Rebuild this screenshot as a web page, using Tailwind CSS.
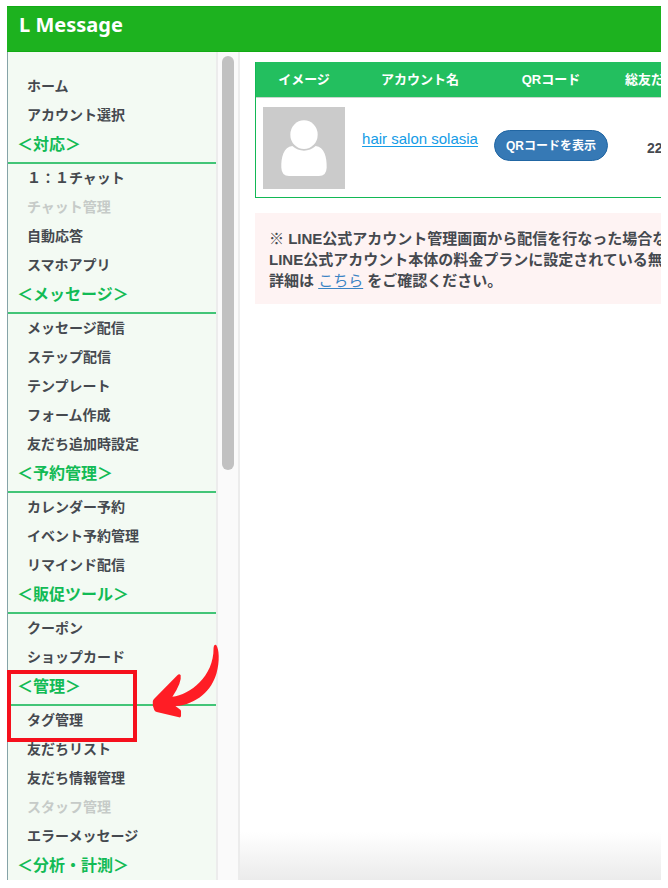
<!DOCTYPE html>
<html lang="ja">
<head>
    <meta charset="UTF-8">
    <meta name="viewport" content="width=device-width, initial-scale=1.0">
    <title>L Message</title>
    <script src="https://cdn.jsdelivr.net/npm/@tailwindcss/browser@4"></script>
</head>
<body class="h-screen bg-white pt-[6px] pb-2 px-[7px] font-['Liberation_Sans','Noto_Sans_CJK_JP',sans-serif] text-[#45494f]">
    <div class="h-full flex flex-col overflow-hidden">
        <!-- Header -->
        <header class="h-[46px] shrink-0 bg-[#1db21f] border-y border-[#12ab14] px-3 pt-1">
            <h1 class="text-xl leading-7 font-bold text-white font-['Noto_Sans',sans-serif]">L Message</h1>
        </header>

        <div class="flex flex-1 min-h-0">
            <!-- Sidebar -->
            <nav class="w-[211px] shrink-0 bg-[#f3faf3] border-l border-l-[#86a3a8] border-r-2 border-r-[#ececec] pt-5 text-sm leading-[29px] font-bold">
                <ul class="pl-[19px]">
                    <li><a href="#">ホーム</a></li>
                    <li><a href="#">アカウント選択</a></li>
                </ul>

                <h2 class="h-[34px] pl-[9px] text-base leading-[30px] text-[#12bb55] border-b-2 border-[#42c577]">＜対応＞</h2>
                <ul class="pl-[19px]">
                    <li><a href="#">１：１チャット</a></li>
                    <li><a href="#" class="text-[#c6cbc8]">チャット管理</a></li>
                    <li><a href="#">自動応答</a></li>
                    <li><a href="#">スマホアプリ</a></li>
                </ul>

                <h2 class="h-[34px] pl-[9px] text-base leading-[30px] text-[#12bb55] border-b-2 border-[#42c577]">＜メッセージ＞</h2>
                <ul class="pl-[19px]">
                    <li><a href="#">メッセージ配信</a></li>
                    <li><a href="#">ステップ配信</a></li>
                    <li><a href="#">テンプレート</a></li>
                    <li><a href="#">フォーム作成</a></li>
                    <li><a href="#">友だち追加時設定</a></li>
                </ul>

                <h2 class="h-[34px] pl-[9px] text-base leading-[30px] text-[#12bb55] border-b-2 border-[#42c577]">＜予約管理＞</h2>
                <ul class="pl-[19px]">
                    <li><a href="#">カレンダー予約</a></li>
                    <li><a href="#">イベント予約管理</a></li>
                    <li><a href="#">リマインド配信</a></li>
                </ul>

                <h2 class="h-[34px] pl-[9px] text-base leading-[30px] text-[#12bb55] border-b-2 border-[#42c577]">＜販促ツール＞</h2>
                <ul class="pl-[19px]">
                    <li><a href="#">クーポン</a></li>
                    <li><a href="#">ショップカード</a></li>
                </ul>

                <div class="relative">
                    <h2 class="h-[34px] pl-[9px] text-base leading-[30px] text-[#12bb55] border-b-2 border-[#42c577]">＜管理＞</h2>
                    <ul class="pl-[19px]">
                        <li><a href="#">タグ管理</a></li>
                        <li><a href="#">友だちリスト</a></li>
                        <li><a href="#">友だち情報管理</a></li>
                        <li><a href="#" class="text-[#c6cbc8]">スタッフ管理</a></li>
                        <li><a href="#">エラーメッセージ</a></li>
                    </ul>
                    <!-- Highlight box and arrow -->
                    <div class="absolute -top-0.5 -left-px z-10 w-[130px] h-[72px] border-4 border-[#f5101c]"></div>
                    <svg class="absolute -top-[29px] left-36 z-10 w-[68px] h-[75px]" viewBox="36 24 204 226" fill="#ff1d25">
                        <path d="M221 40Q222 26 229 30C238 42 240 80 230 115C216 165 172 209 106 214L121 225Q123 227 123 230V244Q122 249 117 248L50 232Q44 231 42 225L38 212V200Q38 195 43 191L112 121Q118 115 122 121Q126 142 97 186C150 180 222 125 221 40Z"/>
                    </svg>
                </div>

                <h2 class="h-[34px] pl-[9px] text-base leading-[30px] text-[#12bb55] border-b-2 border-[#42c577]">＜分析・計測＞</h2>
            </nav>

            <!-- Scrollbar -->
            <div class="w-[22px] shrink-0 bg-[#fafafa] border-r-2 border-[#ececec] pt-1 pl-1">
                <div class="w-3 h-[414px] rounded-full bg-[#c1c1c1]"></div>
            </div>

            <!-- Main Content -->
            <main class="flex-1 min-w-0 overflow-hidden flex flex-col">
                <div class="pl-[15px] pt-[10px]">
                    <table class="w-[520px] table-fixed border-separate border-spacing-0 text-[13px] border-l border-b border-l-[#12b855] border-b-[#12b855]">
                        <thead class="bg-[#23bf5f] text-white">
                            <tr class="h-9">
                                <th class="w-24 border-b border-[#c9d6cd]">イメージ</th>
                                <th class="w-[136px] border-b border-[#c9d6cd]">アカウント名</th>
                                <th class="w-[126px] border-b border-[#c9d6cd]">QRコード</th>
                                <th class="pl-[11px] text-left border-b border-[#c9d6cd]">総友だち数</th>
                            </tr>
                        </thead>
                        <tbody>
                            <tr>
                                <td class="pt-[9px] pb-2 pl-[7px]">
                                    <svg class="block w-[82px] h-[82px] bg-[#cbcbcb]" viewBox="0 0 246 246" fill="#fff" role="img" aria-label="イメージ">
                                        <path d="M88 117C62 120 54 150 55 182Q56 207 78 207H168Q190 207 191 182C192 150 184 120 158 117Q142 131 123 131Q104 131 88 117Z"/>
                                        <ellipse cx="123" cy="83" rx="41" ry="43"/>
                                    </svg>
                                </td>
                                <td class="pb-4 text-center">
                                    <a href="#" class="text-[15px] text-[#149be6] underline underline-offset-2">hair salon solasia</a>
                                </td>
                                <td class="pb-1">
                                    <button type="button" class="block mx-auto w-[114px] h-[31px] rounded-full bg-[#3679b5] border border-[#2166a3] text-xs font-bold text-white">QRコードを表示</button>
                                </td>
                                <td class="pl-[33px] text-sm font-bold">22</td>
                            </tr>
                        </tbody>
                    </table>

                    <!-- Notice -->
                    <div class="mt-[15px] w-[720px] bg-[#fef3f3] pt-[15px] pb-[13px] px-[14px] text-[15px] leading-[21px] font-bold">
                        <p>※ LINE公式アカウント管理画面から配信を行なった場合など、</p>
                        <p>LINE公式アカウント本体の料金プランに設定されている無料</p>
                        <p>詳細は <a href="#" class="font-normal text-[#3a84c4] underline underline-offset-2">こちら</a> をご確認ください。</p>
                    </div>
                </div>
                <div class="mt-auto h-12 bg-linear-to-b from-white to-[#ebebeb]"></div>
            </main>
        </div>
    </div>
</body>
</html>
